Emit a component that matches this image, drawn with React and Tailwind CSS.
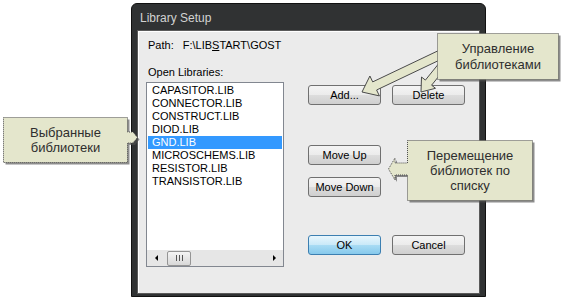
import React from "react";

const arrow = (x1, y1, x2, y2, sw, hw, hl) => {
  const dx = x2 - x1;
  const dy = y2 - y1;
  const len = Math.hypot(dx, dy);
  const ux = dx / len;
  const uy = dy / len;
  const nx = -uy;
  const ny = ux;
  const bx = x2 - ux * hl;
  const by = y2 - uy * hl;
  const p = [
    [x1 + (nx * sw) / 2, y1 + (ny * sw) / 2],
    [bx + (nx * sw) / 2, by + (ny * sw) / 2],
    [bx + (nx * hw) / 2, by + (ny * hw) / 2],
    [x2, y2],
    [bx - (nx * hw) / 2, by - (ny * hw) / 2],
    [bx - (nx * sw) / 2, by - (ny * sw) / 2],
    [x1 - (nx * sw) / 2, y1 - (ny * sw) / 2],
  ];
  return p.map((q) => q.map((v) => v.toFixed(1)).join(",")).join(" ");
};

const Btn = ({ children, primary }) => (
  <button
    className={
      primary
        ? "w-[73px] h-[20px] rounded-[3px] border border-[#3c7fb1] bg-[linear-gradient(#e8f6fd,#c9e9f8_50%,#a9dcf4_50%,#86c9ec)] text-[11px] leading-none text-black"
        : "w-[73px] h-[20px] rounded-[3px] border border-[#707070] bg-[linear-gradient(#f4f4f4,#ebebeb_50%,#dddddd_50%,#cfcfcf)] text-[11px] leading-none text-black"
    }
  >
    {children}
  </button>
);

const libs = [
  "CAPASITOR.LIB",
  "CONNECTOR.LIB",
  "CONSTRUCT.LIB",
  "DIOD.LIB",
  "GND.LIB",
  "MICROSCHEMS.LIB",
  "RESISTOR.LIB",
  "TRANSISTOR.LIB",
];

const fill = "#e4e6cc";
const edge = "#4a4a4a";

export default function App() {
  const c1 =
    "3.5,117.5 127.5,117.5 127.5,132 133,132 137.5,137.5 133,143 127.5,143 127.5,162.5 3.5,162.5";
  const c3 =
    "407.5,140.5 532.5,140.5 532.5,200.5 407.5,200.5 407.5,175 395,175 395,180 388.5,169 395,158 395,163 407.5,163";
  const c2 = "437.5,33.5 558.5,33.5 558.5,79.5 437.5,79.5";
  const a1 = arrow(446, 52, 362, 92, 9, 22, 14);
  const a2 = arrow(450, 56, 421, 92, 8, 18, 12);

  return (
    <div className="relative w-[565px] h-[301px] bg-white overflow-hidden font-['Liberation_Sans',Arial,sans-serif]">
      <div className="ml-[131px] pt-[3px]">
        <div className="w-[355px] h-[294px] bg-[#303233] rounded-t-[6px] border border-[#111111] flex flex-col px-[6px] pb-[3px]">
          <div className="h-[27px] flex items-center pl-[2px] pt-[1px] text-[12px] text-[#d2d2d2]">
            Library Setup
          </div>
          <div className="flex-1 bg-[#ebebeb] shadow-[inset_1px_1px_0_#ffffff,0_0_0_1px_#5a5a5a] text-[11px] leading-[13px] text-black">
            <div className="pt-[8px] pl-[10px] flex">
              <span>Path:</span>
              <span className="ml-[9px]">
                {"F:\\LIB"}
                <span className="underline">S</span>
                {"TART\\GOST"}
              </span>
            </div>
            <div className="flex mt-[14px] pl-[8px]">
              <div className="w-[138px] flex flex-col">
                <div className="pl-[2px]">Open Libraries:</div>
                <div className="mt-[3px] h-[185px] border border-[#828790] bg-white flex flex-col">
                  <div className="flex-1 pt-[1px]">
                    {libs.map((l) => (
                      <div
                        key={l}
                        className={
                          l === "GND.LIB"
                            ? "h-[13px] mx-[1px] pl-[4px] bg-[#3399ff] text-white"
                            : "h-[13px] mx-[1px] pl-[4px]"
                        }
                      >
                        {l}
                      </div>
                    ))}
                  </div>
                  <div className="h-[16px] bg-[#e6e6e6] flex items-center">
                    <div className="w-[18px] h-full flex items-center justify-center">
                      <div className="w-0 h-0 border-y-[3px] border-y-transparent border-r-[3px] border-r-black" />
                    </div>
                    <div className="ml-[2px] w-[24px] h-[15px] rounded-[2px] border border-[#959595] bg-[linear-gradient(#f4f4f4,#d8d8d8)] flex items-center justify-center gap-[2px]">
                      <div className="w-px h-[6px] bg-[#555]" />
                      <div className="w-px h-[6px] bg-[#555]" />
                      <div className="w-px h-[6px] bg-[#555]" />
                    </div>
                    <div className="flex-1" />
                    <div className="w-[18px] h-full flex items-center justify-center">
                      <div className="w-0 h-0 border-y-[3px] border-y-transparent border-l-[3px] border-l-black" />
                    </div>
                  </div>
                </div>
              </div>
              <div className="ml-[24px] mt-[19px] flex flex-col">
                <div className="flex gap-[11px]">
                  <Btn>Add...</Btn>
                  <Btn>Delete</Btn>
                </div>
                <div className="mt-[40px]">
                  <Btn>Move Up</Btn>
                </div>
                <div className="mt-[12px]">
                  <Btn>Move Down</Btn>
                </div>
                <div className="flex gap-[11px] mt-[38px]">
                  <Btn primary>OK</Btn>
                  <Btn>Cancel</Btn>
                </div>
              </div>
            </div>
          </div>
        </div>
      </div>

      <svg
        className="absolute left-0 top-0 pointer-events-none"
        width="565"
        height="301"
        viewBox="0 0 565 301"
      >
        <polygon points={c1} fill="#505050" opacity="0.65" transform="translate(2,2)" />
        <polygon points={c1} fill={fill} stroke={edge} strokeWidth="1" strokeDasharray="1 1" />
        <polygon points={c3} fill="#505050" opacity="0.65" transform="translate(2,2)" />
        <polygon points={c3} fill={fill} stroke={edge} strokeWidth="1" strokeDasharray="1 1" />
        <polygon points={a1} fill={fill} stroke={edge} strokeWidth="1" />
        <polygon points={a2} fill={fill} stroke={edge} strokeWidth="1" />
        <polygon points={c2} fill="#505050" opacity="0.65" transform="translate(2,2)" />
        <polygon points={c2} fill={fill} stroke={edge} strokeWidth="1" strokeDasharray="1 1" />
      </svg>

      <div className="absolute left-[4px] top-[118px] w-[123px] h-[44px] flex items-center justify-center text-center text-[13px] leading-[15px] text-[#2e2e2e]">
        Выбранные
        <br />
        библиотеки
      </div>
      <div className="absolute left-[438px] top-[34px] w-[120px] h-[45px] flex items-center justify-center text-center text-[13px] leading-[16px] text-[#2e2e2e]">
        Управление
        <br />
        библиотеками
      </div>
      <div className="absolute left-[408px] top-[141px] w-[124px] h-[59px] flex items-center justify-center text-center text-[13px] leading-[15px] text-[#2e2e2e]">
        Перемещение
        <br />
        библиотек по
        <br />
        списку
      </div>
    </div>
  );
}
